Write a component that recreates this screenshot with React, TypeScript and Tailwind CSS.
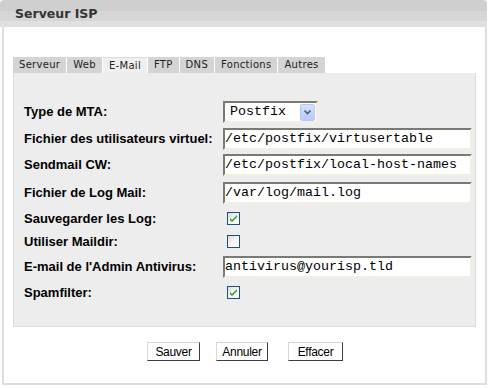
import React from "react";

const tabs = ["Serveur", "Web", "E-Mail", "FTP", "DNS", "Fonctions", "Autres"];

const TextBox = ({ value }: { value: string }) => (
  <div className="h-[22px] w-[249px] bg-white border-2 border-t-[#7a7a72] border-l-[#7a7a72] border-b-[#f1efe2] border-r-[#f1efe2] flex items-center font-['Liberation_Mono',monospace] text-[13.33px] text-black whitespace-nowrap overflow-hidden">
    {value}
  </div>
);

const CheckBox = ({ checked }: { checked: boolean }) => (
  <div className="ml-[4px] w-[13px] h-[13px] border border-[#1c5180] bg-gradient-to-br from-[#dcdcd5] via-[#f6f6f3] to-white flex items-center justify-center">
    {checked && (
      <svg width="9" height="9" viewBox="0 0 9 9">
        <path d="M1 4 L3 6 L8 1 L8 3 L3 8 L1 6 Z" fill="#21a121" />
      </svg>
    )}
  </div>
);

const Select = () => (
  <div className="h-[22px] w-[95px] bg-white border-2 border-t-[#7a7a72] border-l-[#7a7a72] border-b-[#f1efe2] border-r-[#f1efe2] flex items-center justify-between pr-[1px]">
    <span className="pl-[5px] font-['Liberation_Mono',monospace] text-[13.33px] text-black">Postfix</span>
    <div className="w-[15px] h-[17px] rounded-[2px] border border-[#b4c8f6] bg-gradient-to-b from-[#d6e2fd] to-[#b8cbf9] flex items-center justify-center">
      <svg width="7" height="5" viewBox="0 0 7 5">
        <path d="M0.5 0.5 L3.5 3.5 L6.5 0.5" stroke="#4d6185" strokeWidth="1.6" fill="none" />
      </svg>
    </div>
  </div>
);

const rows: { label: string; h: string; field: React.ReactNode }[] = [
  { label: "Type de MTA:", h: "h-[26px]", field: <Select /> },
  { label: "Fichier des utilisateurs virtuel:", h: "h-[27px]", field: <TextBox value="/etc/postfix/virtusertable" /> },
  { label: "Sendmail CW:", h: "h-[26px]", field: <TextBox value="/etc/postfix/local-host-names" /> },
  { label: "Fichier de Log Mail:", h: "h-[30px]", field: <TextBox value="/var/log/mail.log" /> },
  { label: "Sauvegarder les Log:", h: "h-[21px]", field: <CheckBox checked /> },
  { label: "Utiliser Maildir:", h: "h-[25px]", field: <CheckBox checked={false} /> },
  { label: "E-mail de l'Admin Antivirus:", h: "h-[25px]", field: <TextBox value="antivirus@yourisp.tld" /> },
  { label: "Spamfilter:", h: "h-[27px]", field: <CheckBox checked /> },
];

const Btn = ({ children, cls }: { children: string; cls: string }) => (
  <button className={`${cls} h-[19px] bg-white border border-t-[#d8d8d8] border-l-[#d8d8d8] border-b-[#3a3a4a] border-r-[#3a3a4a] font-['Liberation_Sans',sans-serif] text-[12px] text-black leading-none tracking-[-0.3px]`}>
    {children}
  </button>
);

export default function App() {
  return (
    <div className="w-[489px] h-[388px] bg-white">
      <div className="w-[487px]">
        <div className="h-[27px] rounded-t-[4px] bg-[linear-gradient(to_bottom,#cfcfcf_0px,#cfcfcf_11px,#d6d6d6_11px,#d6d6d6_21px,#e0e0e0_21px)] pl-[15px] pt-[8px] font-['DejaVu_Sans',sans-serif] font-bold text-[12.5px] leading-none text-[#333]">
          Serveur ISP
        </div>
        <div className="ml-[2px] w-[485px] h-[358px] border-x-2 border-b-2 border-[#dedede] px-[9px] pt-[30px]">
          <div className="flex gap-[1px] h-[16px]">
            {tabs.map((t) => (
              <div
                key={t}
                className={`px-[6px] flex items-center font-['DejaVu_Sans',sans-serif] text-[10px] leading-none tracking-[0.3px] text-[#222] ${
                  t === "E-Mail" ? "bg-[#efefef] border-t border-[#dcdcdc]" : "bg-[#d4d4d4]"
                }`}
              >
                {t}
              </div>
            ))}
          </div>
          <div className="h-[254px] bg-[#ededed] border border-t-0 border-[#dcdcdc] pl-[10px] pt-[26px]">
            {rows.map((r) => (
              <div key={r.label} className={`flex items-center ${r.h}`}>
                <div className="w-[199px] font-['Liberation_Sans',sans-serif] font-bold text-[13px] text-black whitespace-nowrap">
                  {r.label}
                </div>
                {r.field}
              </div>
            ))}
          </div>
          <div className="flex mt-[15px]">
            <Btn cls="ml-[134px] w-[53px]">Sauver</Btn>
            <Btn cls="ml-[16px] w-[52px]">Annuler</Btn>
            <Btn cls="ml-[20px] w-[55px]">Effacer</Btn>
          </div>
        </div>
      </div>
    </div>
  );
}
